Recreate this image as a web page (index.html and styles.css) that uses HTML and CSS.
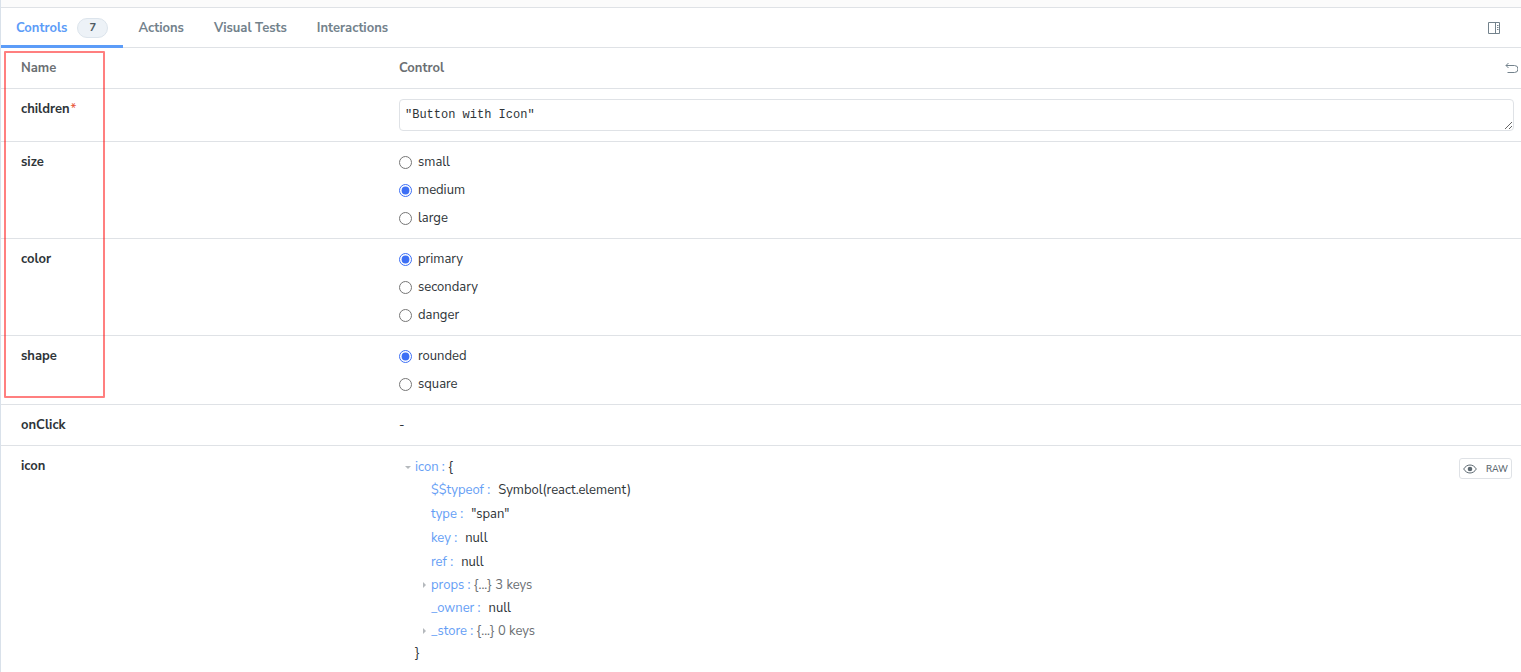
FILE: index.html
```html
<!DOCTYPE html>
<html lang="en">
<head>
    <meta charset="UTF-8">
    <meta name="viewport" content="width=device-width, initial-scale=1.0">
    <title>Controls</title>
    <link rel="stylesheet" href="styles.css">
</head>
<body>
    <div class="panel">
        <div class="canvas-edge"></div>
        <div class="tab-bar">
            <div class="tabs" role="tablist">
                <button class="tab active" role="tab" aria-selected="true">Controls <span class="badge">7</span></button>
                <button class="tab" role="tab">Actions</button>
                <button class="tab" role="tab">Visual Tests</button>
                <button class="tab" role="tab">Interactions</button>
            </div>
            <button class="icon-button" aria-label="Change addon orientation">
                <svg width="12" height="12" viewBox="0 0 12 12" fill="none" stroke="#73828c">
                    <path d="M.5 .5h11v11H.5zM7.5 .5v11"/>
                    <path d="M9 3.5h1.5M9 5.5h1.5M9 7.5h1.5"/>
                </svg>
            </button>
        </div>

        <div class="table-wrap">
            <table class="args-table">
                <thead>
                    <tr>
                        <th class="name-col">Name</th>
                        <th>
                            <div class="control-head">
                                <span>Control</span>
                                <button class="reset-button" aria-label="Reset controls">
                                    <svg width="13" height="12" viewBox="0 0 13 12" fill="none" stroke="#73828c">
                                        <path d="M3.5 1L1 3.5L3.5 6"/>
                                        <path d="M1 3.5h8.5a3 3 0 0 1 0 7H2.5"/>
                                    </svg>
                                </button>
                            </div>
                        </th>
                    </tr>
                </thead>
                <tbody>
                    <tr>
                        <td class="arg-name"><label for="children">children</label><span class="required">*</span></td>
                        <td><textarea class="text-control" id="children" rows="1">"Button with Icon"</textarea></td>
                    </tr>
                    <tr>
                        <td class="arg-name">size</td>
                        <td>
                            <div class="options">
                                <label class="option"><input type="radio" name="size"> <span>small</span></label>
                                <label class="option"><input type="radio" name="size" checked> <span>medium</span></label>
                                <label class="option"><input type="radio" name="size"> <span>large</span></label>
                            </div>
                        </td>
                    </tr>
                    <tr>
                        <td class="arg-name">color</td>
                        <td>
                            <div class="options">
                                <label class="option"><input type="radio" name="color" checked> <span>primary</span></label>
                                <label class="option"><input type="radio" name="color"> <span>secondary</span></label>
                                <label class="option"><input type="radio" name="color"> <span>danger</span></label>
                            </div>
                        </td>
                    </tr>
                    <tr>
                        <td class="arg-name">shape</td>
                        <td>
                            <div class="options">
                                <label class="option"><input type="radio" name="shape" checked> <span>rounded</span></label>
                                <label class="option"><input type="radio" name="shape"> <span>square</span></label>
                            </div>
                        </td>
                    </tr>
                    <tr>
                        <td class="arg-name">onClick</td>
                        <td>-</td>
                    </tr>
                    <tr>
                        <td class="arg-name">icon</td>
                        <td>
                            <div class="object-control">
                                <div class="tree">
                                    <div class="node open"><span class="key">icon :</span> {</div>
                                    <ul class="tree-list">
                                        <li class="leaf"><span class="key">$$typeof :</span><span class="value">Symbol(react.element)</span></li>
                                        <li class="leaf"><span class="key">type :</span><span class="value">"span"</span></li>
                                        <li class="leaf"><span class="key">key :</span><span class="value">null</span></li>
                                        <li class="leaf"><span class="key">ref :</span><span class="value">null</span></li>
                                        <li class="node closed"><span class="key">props :</span> <span class="summary">{...} 3 keys</span></li>
                                        <li class="leaf"><span class="key">_owner :</span><span class="value">null</span></li>
                                        <li class="node closed"><span class="key">_store :</span> <span class="summary">{...} 0 keys</span></li>
                                    </ul>
                                    <div class="node">}</div>
                                </div>
                                <button class="raw-button">
                                    <svg width="14" height="10" viewBox="0 0 14 10" fill="none" stroke="#5c6870">
                                        <path d="M.7 5C2.2 2.5 4.4 1 7 1s4.8 1.5 6.3 4C11.8 7.5 9.600 9 7 9S2.2 7.5 .7 5z"/>
                                        <circle cx="7" cy="5" r="2.3" fill="#5c6870" stroke="none"/>
                                    </svg>
                                    RAW
                                </button>
                            </div>
                        </td>
                    </tr>
                </tbody>
            </table>
            <div class="highlight"></div>
        </div>
    </div>
</body>
</html>
```

FILE: styles.css
```css
* {
    box-sizing: border-box;
}
body {
    margin: 0;
    font-family: "Nunito Sans", "Open Sans", "Noto Sans", sans-serif;
    font-size: 13px;
    line-height: 20px;
    color: #2e3438;
    background-color: #fff;
}
button {
    font-family: inherit;
    background: none;
    border: none;
    padding: 0;
    cursor: pointer;
}
svg {
    display: block;
}
.panel {
    min-height: 100vh;
    border-left: 1px solid #d9e1ea;
}
.canvas-edge {
    height: 8px;
    background-color: #fbfbfb;
    border-bottom: 1px solid #dfe2e6;
}
.tab-bar {
    display: flex;
    justify-content: space-between;
    height: 40px;
    padding-right: 20px;
    border-bottom: 1px solid #dfe2e6;
}
.tabs {
    display: flex;
    height: 40px;
}
.tab {
    display: flex;
    align-items: center;
    gap: 10px;
    padding: 0 15px;
    font-size: 13px;
    font-weight: 700;
    color: #73828c;
    border-top: 3px solid transparent;
    border-bottom: 3px solid transparent;
}
.tab.active {
    color: #5c9cf8;
    border-bottom-color: #5c9cf8;
}
.badge {
    min-width: 31px;
    padding: 0 8px;
    font-size: 11px;
    line-height: 18px;
    color: #4f5a63;
    background-color: #edf2f7;
    border: 1px solid #dce4ec;
    border-radius: 10px;
}
.icon-button {
    padding: 0 1px;
}
.table-wrap {
    position: relative;
}
.args-table {
    width: 100%;
    border-collapse: collapse;
}
.args-table th,
.args-table td {
    padding: 10px 7px 10px 18px;
    text-align: left;
    vertical-align: top;
    border-bottom: 1px solid #dfe2e6;
}
.args-table tr > :first-child {
    padding-left: 20px;
}
.args-table tbody tr:last-child td {
    border-bottom: none;
}
.args-table th {
    font-weight: 700;
    color: #6b6f73;
}
.args-table th:last-child {
    padding-right: 3px;
}
.name-col {
    width: 25%;
}
.arg-name {
    font-weight: 700;
}
.required {
    margin-left: 1px;
    font-weight: 400;
    color: #e8553a;
}
.control-head {
    display: flex;
    justify-content: space-between;
}
.text-control {
    display: block;
    width: 100%;
    height: 32px;
    padding: 5px;
    font-family: "Liberation Mono", monospace;
    font-size: 12px;
    line-height: 20px;
    color: #2e3438;
    border: 1px solid #dfe2e6;
    border-radius: 4px;
    overflow: hidden;
    resize: vertical;
}
.options {
    display: flex;
    flex-direction: column;
    align-items: flex-start;
    gap: 8px;
}
.option {
    display: flex;
    align-items: center;
    gap: 6px;
}
.option input {
    width: 13px;
    height: 13px;
    margin: 0;
    accent-color: #3d6ff5;
}
.object-control {
    display: flex;
    justify-content: space-between;
    align-items: flex-start;
    padding: 0 2px 0 16px;
}
.tree-list {
    margin: 0;
    padding-left: 16px;
    list-style: none;
}
.node {
    position: relative;
    line-height: 22px;
}
.leaf {
    line-height: 24px;
}
.key {
    color: #659ef5;
}
.value {
    margin-left: 8px;
}
.summary {
    color: #6b6f73;
}
.open::before,
.closed::before {
    content: "";
    position: absolute;
    border: 3px solid transparent;
}
.open::before {
    left: -10px;
    top: 10px;
    border-top-color: #b5b9bd;
    border-bottom: none;
}
.closed::before {
    left: -8px;
    top: 8px;
    border-left-color: #b5b9bd;
    border-right: none;
}
.raw-button {
    display: flex;
    align-items: center;
    gap: 9px;
    height: 21px;
    margin-top: 2px;
    padding: 0 3px;
    font-size: 9px;
    font-weight: 600;
    color: #5c6870;
    border: 1px solid #dfe2e6;
    border-radius: 3px;
}
/* outline around the argument names */
.highlight {
    position: absolute;
    top: 3px;
    left: 3px;
    width: 101px;
    height: 347px;
    border: 2px solid rgba(255, 0, 0, 0.5);
    border-radius: 1px;
}
```
